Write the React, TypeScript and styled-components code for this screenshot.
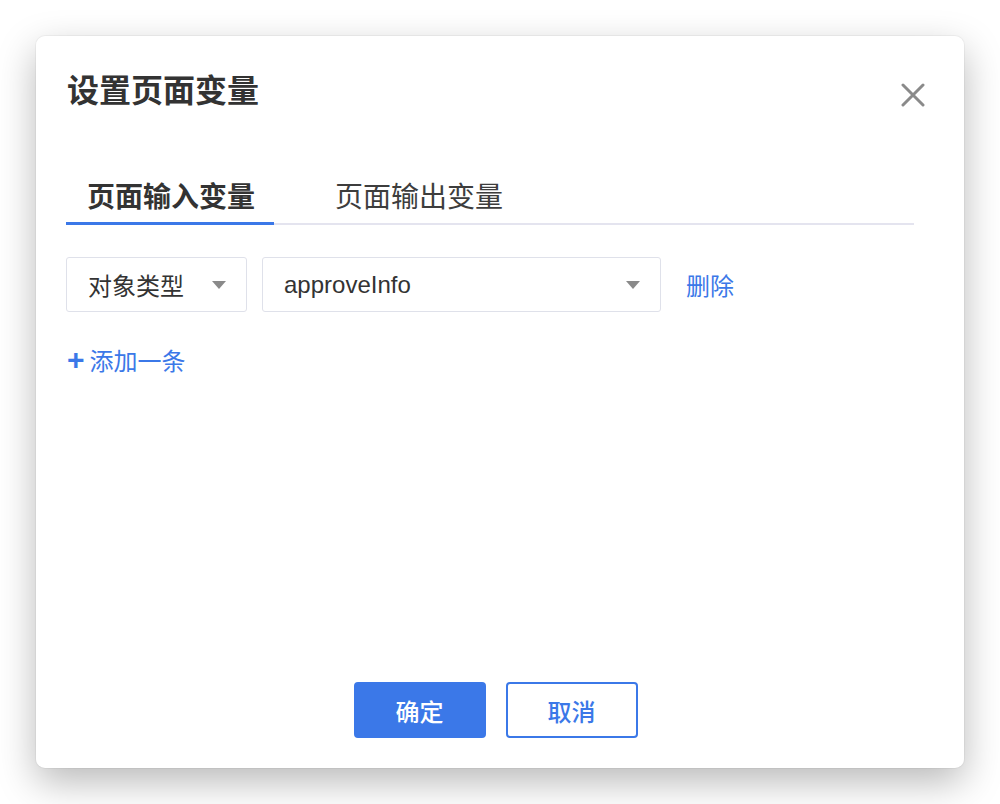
import styled, { createGlobalStyle } from "styled-components";

const GlobalStyle = createGlobalStyle`
  html, body {
    margin: 0;
    padding: 0;
    background: #ffffff;
  }
  body {
    font-family: "Noto Sans CJK SC", "Liberation Sans", sans-serif;
  }
`;

const blue = "#3b78e8";
const border = "#dfe1ea";

const Page = styled.div`
  width: 1000px;
  height: 804px;
  padding: 36px 0 0 36px;
  box-sizing: border-box;
`;

const Dialog = styled.div`
  width: 928px;
  height: 732px;
  box-sizing: border-box;
  padding: 36px 50px 30px 31px;
  background: #ffffff;
  border-radius: 9px;
  box-shadow: 0 14px 38px rgba(0, 0, 0, 0.28), 0 0 0 1px rgba(0, 0, 0, 0.04);
  display: flex;
  flex-direction: column;
`;

const Header = styled.div`
  display: flex;
  justify-content: space-between;
  align-items: flex-start;
`;

const Title = styled.h1`
  margin: 0;
  font-size: 32px;
  line-height: 32px;
  font-weight: 700;
  color: #333333;
`;

const Close = styled.button`
  width: 24px;
  height: 24px;
  margin: 11px -11px 0 0;
  padding: 0;
  border: none;
  background: none;
  display: flex;
`;

const TabBar = styled.div`
  display: flex;
  gap: 40px;
  margin: 75px 0 0 -1px;
  box-shadow: inset 0 -2px 0 #e4e4ef;
`;

const Tab = styled.div<{ $active?: boolean }>`
  padding: 0 19px 13px 21px;
  font-size: 28px;
  line-height: 27px;
  font-weight: ${(p) => (p.$active ? 600 : 400)};
  color: ${(p) => (p.$active ? "#333333" : "#3d3d3d")};
  border-bottom: 3px solid ${(p) => (p.$active ? blue : "transparent")};
`;

const Row = styled.div`
  display: flex;
  align-items: center;
  margin: 32px 0 0 -1px;
`;

const Select = styled.div<{ $width: number }>`
  width: ${(p) => p.$width}px;
  height: 55px;
  box-sizing: border-box;
  border: 1px solid ${border};
  border-radius: 3px;
  padding: 0 20px 0 21px;
  display: flex;
  align-items: center;
  justify-content: space-between;
  margin-right: 15px;
`;

const SelectText = styled.span<{ $latin?: boolean }>`
  font-size: 24px;
  color: #333333;
  font-family: ${(p) =>
    p.$latin
      ? `"Liberation Sans", "Noto Sans CJK SC", sans-serif`
      : `"Noto Sans CJK SC", sans-serif`};
`;

const Caret = styled.span`
  width: 0;
  height: 0;
  border-left: 7px solid transparent;
  border-right: 7px solid transparent;
  border-top: 8px solid #8a8a8a;
`;

const LinkText = styled.span`
  margin-left: 10px;
  font-size: 24px;
  color: ${blue};
`;

const AddLink = styled.div`
  margin-top: 36px;
  display: flex;
  align-items: center;
  font-size: 24px;
  line-height: 24px;
  color: ${blue};
`;

const Plus = styled.span`
  font-family: "Liberation Sans", sans-serif;
  font-weight: 700;
  font-size: 30px;
  line-height: 24px;
  margin-right: 5px;
`;

const Footer = styled.div`
  margin-top: auto;
  display: flex;
  justify-content: center;
  gap: 20px;
  padding-left: 10px;
`;

const Button = styled.button<{ $primary?: boolean }>`
  width: 132px;
  height: 56px;
  box-sizing: border-box;
  border-radius: 4px;
  border: 2px solid ${blue};
  background: ${(p) => (p.$primary ? blue : "#ffffff")};
  color: ${(p) => (p.$primary ? "#ffffff" : blue)};
  font-family: "Noto Sans CJK SC", sans-serif;
  font-size: 24px;
  font-weight: 500;
  padding: 0;
`;

const App = () => {
  return (
    <>
      <GlobalStyle />
      <Page>
        <Dialog>
          <Header>
            <Title>设置页面变量</Title>
            <Close aria-label="关闭">
              <svg width="24" height="24" viewBox="0 0 24 24">
                <path
                  d="M2 2 L22 22 M22 2 L2 22"
                  stroke="#8a8a8a"
                  strokeWidth="3"
                  strokeLinecap="round"
                />
              </svg>
            </Close>
          </Header>
          <TabBar>
            <Tab $active>页面输入变量</Tab>
            <Tab>页面输出变量</Tab>
          </TabBar>
          <Row>
            <Select $width={181}>
              <SelectText>对象类型</SelectText>
              <Caret />
            </Select>
            <Select $width={399}>
              <SelectText $latin>approveInfo</SelectText>
              <Caret />
            </Select>
            <LinkText>删除</LinkText>
          </Row>
          <AddLink>
            <Plus>+</Plus>
            添加一条
          </AddLink>
          <Footer>
            <Button $primary>确定</Button>
            <Button>取消</Button>
          </Footer>
        </Dialog>
      </Page>
    </>
  );
};

export default App;
